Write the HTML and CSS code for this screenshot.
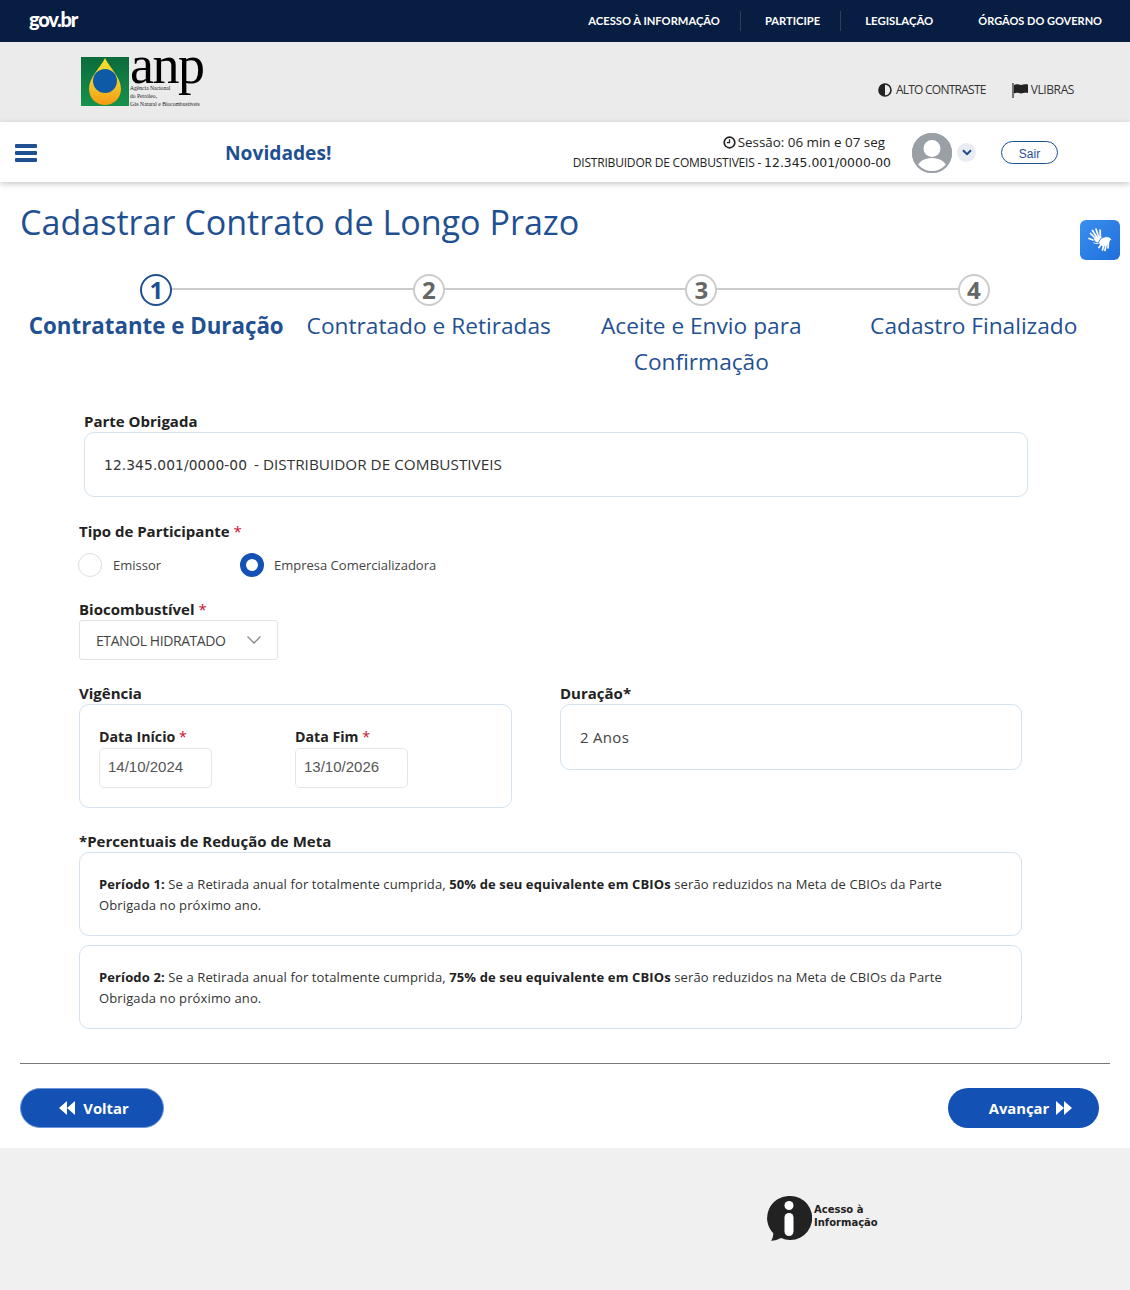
FILE: index.html
```html
<!DOCTYPE html>
<html lang="pt-BR">
<head>
<meta charset="utf-8">
<title>Cadastrar Contrato de Longo Prazo</title>
<link rel="stylesheet" href="styles.css">
</head>
<body>
<div class="topbar">
  <div class="govbr">gov.br</div>
  <nav class="toplinks">
    <a class="toplink">ACESSO À INFORMAÇÃO</a>
    <a class="toplink">PARTICIPE</a>
    <a class="toplink plain">LEGISLAÇÃO</a>
    <a class="toplink last">ÓRGÃOS DO GOVERNO</a>
  </nav>
</div>
<header class="brand">
  <div class="logo">
    <svg class="logo-mark" viewBox="0 0 48 49" width="48" height="49">
      <defs>
        <linearGradient id="drop" x1="0" y1="0" x2="0" y2="1">
          <stop offset="0" stop-color="#f3e12b"/><stop offset=".6" stop-color="#f3c22a"/><stop offset="1" stop-color="#f39a12"/>
        </linearGradient>
        <linearGradient id="grn" x1="0" y1="0" x2="0" y2="1">
          <stop offset="0" stop-color="#0b6b3c"/><stop offset="1" stop-color="#16924c"/>
        </linearGradient>
      </defs>
      <rect width="48" height="49" fill="url(#grn)"/>
      <path d="M24 1 C28 10 40 20 40 32 C40 41 33 48 24 48 C15 48 8 41 8 32 C8 20 20 10 24 1Z" fill="url(#drop)"/>
      <circle cx="24" cy="24" r="12" fill="#0f5aa6"/>
    </svg>
    <div class="logo-text">
      <div class="logo-anp">anp</div>
      <div class="logo-sub">Agência Nacional<br>do Petróleo,<br>Gás Natural e Biocombustíveis</div>
    </div>
  </div>
  <div class="tools">
    <span class="tool tool-contrast">
      <svg width="14" height="14" viewBox="0 0 14 14"><circle cx="7" cy="7" r="6" fill="none" stroke="#222" stroke-width="1.6"/><path d="M7 1a6 6 0 0 0 0 12z" fill="#222"/></svg>
      ALTO CONTRASTE
    </span>
    <span class="tool tool-libras">
      <svg width="18" height="15" viewBox="0 0 18 15"><path d="M1 0v15" stroke="#222" stroke-width="1.2"/><path d="M2 2c3-1.500 5 0 7 0s3-1 7-.5v8.500c-4-.5-5 .5-7 .5s-4-1.500-7 0z" fill="#222"/></svg>
      VLIBRAS
    </span>
  </div>
</header>
<div class="navbar">
  <div class="burger"><i></i><i></i><i></i></div>
  <div class="novidades">Novidades!</div>
  <div class="session">
    <div class="session-time">
      <svg width="13" height="13" viewBox="0 0 13 13"><circle cx="6.500" cy="6.500" r="5.300" fill="none" stroke="#222" stroke-width="1.700"/><path d="M6.500 3.300v3.400H3.800" fill="none" stroke="#222" stroke-width="1.300"/></svg>
      Sessão: 06 min e 07 seg
    </div>
    <div class="session-user">DISTRIBUIDOR DE COMBUSTIVEIS - <span class="digits">12.345.001/0000-00</span></div>
  </div>
  <svg class="avatar" width="40" height="40" viewBox="0 0 40 40">
    <defs><clipPath id="av"><circle cx="20" cy="20" r="19.500"/></clipPath></defs>
    <circle cx="20" cy="20" r="20" fill="#9aa0a6"/>
    <g clip-path="url(#av)" fill="#fff">
      <circle cx="20" cy="15.500" r="8.500"/>
      <path d="M4 40c0-10 7-15 16-15s16 5 16 15z"/>
    </g>
    <circle cx="20" cy="20" r="19" fill="none" stroke="#9aa0a6" stroke-width="2"/>
  </svg>
  <div class="chev">
    <svg width="10" height="7" viewBox="0 0 10 7"><path d="M1 1.200l4 4 4-4" fill="none" stroke="#1d4a8a" stroke-width="2"/></svg>
  </div>
  <button class="sair">Sair</button>
</div>

<main class="main">
  <h1 class="title">Cadastrar Contrato de Longo Prazo</h1>
  <ol class="steps">
    <li class="step active"><span class="num">1</span><span class="label">Contratante e Duração</span></li>
    <li class="step"><span class="num">2</span><span class="label">Contratado e Retiradas</span></li>
    <li class="step"><span class="num">3</span><span class="label">Aceite e Envio para Confirmação</span></li>
    <li class="step"><span class="num">4</span><span class="label">Cadastro Finalizado</span></li>
  </ol>

  <section class="form">
    <div class="parte">
      <div class="field-label">Parte Obrigada</div>
      <div class="box parte-box"><span class="digits">12.345.001/0000-00</span> - DISTRIBUIDOR DE COMBUSTIVEIS</div>
    </div>

    <div class="field-label tipo">Tipo de Participante <em>*</em></div>
    <div class="radios">
      <label class="radio"><span class="dot"></span>Emissor</label>
      <label class="radio on"><span class="dot"></span>Empresa Comercializadora</label>
    </div>

    <div class="field-label bio">Biocombustível <em>*</em></div>
    <div class="select">ETANOL HIDRATADO
      <svg width="16" height="10" viewBox="0 0 16 10"><path d="M1.500 1.500l6.500 6.500 6.500-6.500" fill="none" stroke="#888" stroke-width="1.300"/></svg>
    </div>

    <div class="cols">
      <div class="col-vig">
        <div class="field-label boxed">Vigência</div>
        <div class="box vig-box">
          <div class="date">
            <div class="field-label small">Data Início <em>*</em></div>
            <div class="input">14/10/2024</div>
          </div>
          <div class="date">
            <div class="field-label small">Data Fim <em>*</em></div>
            <div class="input">13/10/2026</div>
          </div>
        </div>
      </div>
      <div class="col-dur">
        <div class="field-label boxed">Duração*</div>
        <div class="box dur-box">2 Anos</div>
      </div>
    </div>

    <div class="field-label perc">*Percentuais de Redução de Meta</div>
    <div class="box note"><b>Período 1:</b> Se a Retirada anual for totalmente cumprida, <b>50% de seu equivalente em CBIOs</b> serão reduzidos na Meta de CBIOs da Parte Obrigada no próximo ano.</div>
    <div class="box note second"><b>Período 2:</b> Se a Retirada anual for totalmente cumprida, <b>75% de seu equivalente em CBIOs</b> serão reduzidos na Meta de CBIOs da Parte Obrigada no próximo ano.</div>
  </section>

  <hr class="rule">
  <div class="actions">
    <button class="btn back">
      <svg width="16" height="14" viewBox="0 0 16 14"><path d="M8 0v14L0 7zM16 0v14L8 7z" fill="#fff"/></svg>
      Voltar
    </button>
    <button class="btn next">Avançar
      <svg width="16" height="14" viewBox="0 0 16 14"><path d="M0 0v14l8-7zM8 0v14l8-7z" fill="#fff"/></svg>
    </button>
  </div>
</main>

<footer class="footer">
  <div class="info">
    <svg width="45" height="45" viewBox="0 0 45 45">
      <path d="M23 0a22 22 0 1 1-9 42c-3 1.500-6 2.800-10 2.800 1.500-2 2.300-4.500 2.300-7.500A22 22 0 0 1 23 0z" fill="#222"/>
      <circle cx="22" cy="9.500" r="4.500" fill="#fff"/>
      <rect x="17.500" y="17" width="9" height="23" rx="4.500" fill="#fff"/>
    </svg>
    <div class="info-text">Acesso à<br>Informação</div>
  </div>
</footer>

<div class="libras">
  <svg width="26" height="26" viewBox="0 0 26 26" fill="none" stroke="#fff" stroke-linecap="round">
    <g stroke-width="1.700">
      <path d="M10 13 3.500 6.500M10.500 11.500 5.500 3.500M12 11 9 2M13.500 11 13 3M6 13 2 11.500"/>
    </g>
    <path d="M7 12.500c1-3 5-3.500 8-2l-3 5c-2 .5-4-1-5-3z" fill="#fff" stroke="none"/>
    <path d="M7 16c2 .8 4 .8 6-.5" stroke="#fff" stroke-width="1"/>
    <path d="M14 11.500c3-2 7-2.500 9-1l1.500 2-1.500 1.500-3 5-5 .5-3.500-3.500z" fill="#fff" stroke="#2a7be4" stroke-width=".8"/>
    <g stroke-width="1.700">
      <path d="M21.500 14 21 21M19.500 15 18 23.500M17.500 15 15.500 23M15.500 15 12 20.500"/>
    </g>
  </svg>
</div>
</body>
</html>
```
FILE: styles.css
```css
* { box-sizing: border-box; }
html, body { margin: 0; padding: 0; }
body { background: #fff; color: #222; font-family: "Open Sans", "Noto Sans", sans-serif; width: 1130px; height: 1290px; overflow: hidden; position: relative; }

.topbar { height: 42px; background: #071d41; display: flex; align-items: center; justify-content: space-between; padding: 0 28px; color: #fff; }
.govbr { font: 900 20px/1 "Lato", sans-serif; letter-spacing: -1.200px; margin-top: -5px; margin-left: 1px; }
.toplinks { display: flex; align-items: center; }
.toplink { font: 700 11.200px/20px "Lato", sans-serif; padding: 0 20px 0 24px; border-right: 1px solid #2c3f60; white-space: nowrap; }
.toplink:first-child { padding-left: 0; }
.toplink.plain { border: 0; padding-right: 21px; font-size: 11.400px; }
.toplink.last { border: 0; padding: 0 0 0 24px; font-size: 11px; }

.brand { height: 80px; background: #ebebeb; display: flex; align-items: center; justify-content: space-between; padding: 0 56px 0 81px; }
.logo { display: flex; align-items: flex-start; }
.logo-mark { display: block; }
.logo-text { margin-left: 1px; height: 50px; width: 74px; }
.logo-anp { font: 400 54px/26px "Liberation Serif", serif; color: #000; letter-spacing: -1.500px; height: 31px; margin-top: -5px; }
.logo-sub { font: 400 5.600px/8px "Liberation Serif", serif; color: #222; white-space: nowrap; margin-top: 1px; }
.tools { display: flex; align-items: center; gap: 26px; font: 400 12px/16px "Open Sans", sans-serif; color: #333; margin-top: 16px; letter-spacing: -.4px; }
.tool { display: flex; align-items: center; gap: 3px; }
.tool-contrast { letter-spacing: -.75px; gap: 4px; }
.tool-libras { gap: 1px; }

.navbar { height: 60px; background: #fff; box-shadow: 0 2px 6px rgba(0,0,0,.22); display: flex; align-items: center; position: relative; padding-left: 15px; }
.burger { width: 22px; display: flex; flex-direction: column; gap: 3px; margin-top: 2px; }
.burger i { display: block; height: 4px; border-radius: 1px; background: #1f5092; }
.novidades { margin-left: 188px; font-size: 19.200px; font-weight: 700; color: #1f5092; }
.session { margin-left: auto; text-align: right; font-size: 12px; line-height: 20px; color: #222; width: 330px; padding-top: 1px; }
.session-time { font-size: 13.400px; padding-right: 6px; margin-bottom: 1px; display: flex; align-items: center; justify-content: flex-end; gap: 2px; }
.session-user { letter-spacing: -.2px; white-space: nowrap; }
.session-user .digits { font-size: 12.400px; letter-spacing: 0; }
.digits { font-family: "DejaVu Sans", sans-serif; font-size: 13.800px; letter-spacing: .1px; }
.avatar { margin: 2px 0 0 21px; flex: none; }
.chev { width: 19px; height: 19px; border-radius: 50%; background: #e9ecf3; margin-left: 5px; display: flex; align-items: center; justify-content: center; }
.sair { margin: 1px 72px 0 25px; width: 57px; height: 23px; border: 1px solid #1f5092; border-radius: 12px; background: #fff; font: 400 12px/1 "Liberation Sans", sans-serif; color: #1f5092; padding-top: 4px; }

.main { padding: 0 20px; }
.title { margin: 17px 0 0; font-size: 34.100px; line-height: 46px; font-weight: 400; color: #1f5092; }
.steps { list-style: none; margin: 29px 0 0; padding: 0; display: grid; grid-template-columns: repeat(4, 1fr); }
.step { position: relative; display: flex; flex-direction: column; align-items: center; text-align: center; }
.step::after { content: ""; position: absolute; top: 14px; left: 50%; width: 100%; height: 2px; background: #ccc; }
.step:last-child::after { display: none; }
.num { position: relative; z-index: 1; width: 32px; height: 32px; border: 2px solid #ccc; border-radius: 50%; background: #fff; font-size: 24px; line-height: 27px; font-weight: 700; color: #666; }
.active .num { border-color: #1f5092; color: #1f5092; }
.label { font-size: 22.700px; line-height: 36px; color: #1f5092; margin-top: 2px; }
.active .label { font-size: 22.300px; font-weight: 700; white-space: nowrap; }

.form { padding: 0 88px 0 59px; margin-top: 31px; }
.field-label { font-size: 15px; line-height: 20px; font-weight: 700; color: #222; }
.field-label em { color: #c8102e; font-style: normal; font-weight: 400; }
.field-label.boxed { margin-bottom: 1px; }
.box { border: 1px solid #d4e2f0; border-radius: 10px; background: #fff; }
.parte { margin: 0 -6px 0 5px; }
.parte-box { height: 65px; margin-top: 1px; padding: 0 19px 2px; display: flex; align-items: center; font-size: 15.300px; gap: 7px; color: #333; }
.parte-box .digits { margin-top: 2px; }
.tipo { margin-top: 24px; }
.radios { display: flex; margin-top: 12px; margin-left: -1px; }
.radio { display: flex; align-items: center; font-size: 13px; color: #444; line-height: 24px; gap: 11px; }
.radio:first-child { width: 162px; }
.radio.on { gap: 10px; }
.dot { width: 24px; height: 24px; border-radius: 50%; border: 1px solid #ddd; background: #fff; flex: none; }
.on .dot { border: 6.500px solid #1351b4; }
.bio { margin-top: 22px; }
.select { width: 199px; height: 40px; margin-top: 1px; border: 1px solid #e2e2e2; border-radius: 3px; display: flex; align-items: center; justify-content: space-between; padding: 0 15px 0 16px; font-size: 14px; color: #444; letter-spacing: -.42px; }
.cols { display: flex; margin-top: 23px; gap: 48px; }
.col-vig { width: 433px; }
.col-dur { flex: 1; }
.vig-box { height: 104px; padding: 21px 19px 0; display: flex; }
.date { width: 196px; }
.field-label.small { font-size: 14.200px; line-height: 21px; }
.input { width: 113px; height: 40px; margin-top: 1px; border: 1px solid #e6e6e6; border-radius: 5px; font: 400 15px/36px "Liberation Sans", sans-serif; color: #555; padding-left: 8px; }
.dur-box { height: 66px; padding: 0 19px; display: flex; align-items: center; font-size: 15px; color: #444; letter-spacing: .3px; }
.perc { margin-top: 23px; margin-bottom: 1px; }
.note { height: 84px; padding: 21px 70px 0 19px; font-size: 13px; letter-spacing: .12px; line-height: 21px; color: #333; }
.note b { color: #222; }
.note.second { margin-top: 9px; }

.rule { border: 0; border-top: 1px solid #777; margin: 34px 0 0; }
.actions { display: flex; justify-content: space-between; padding-right: 11px; margin-top: 24px; }
.btn { height: 40px; border: 0; border-radius: 20px; background: #1351b4; color: #fff; font: 700 14.800px/1 "Open Sans", sans-serif; display: flex; align-items: center; justify-content: center; gap: 8px; padding: 0; }
.back { width: 144px; padding-left: 4px; border: 1px solid #6f97d8; }
.next { width: 151px; padding-left: 14px; gap: 7px; }

.footer { margin-top: 20px; height: 142px; background: #f0f0f0; padding: 48px 0 0 767px; }
.info { display: flex; align-items: center; }
.info-text { margin: -6px 0 0 2px; font: 700 10px/13px "DejaVu Sans", sans-serif; color: #222; }

.libras { position: absolute; left: 1080px; top: 220px; width: 40px; height: 40px; border-radius: 6px; background: linear-gradient(135deg, #3c8ef0, #1e6fd9); display: flex; align-items: center; justify-content: center; }
```
